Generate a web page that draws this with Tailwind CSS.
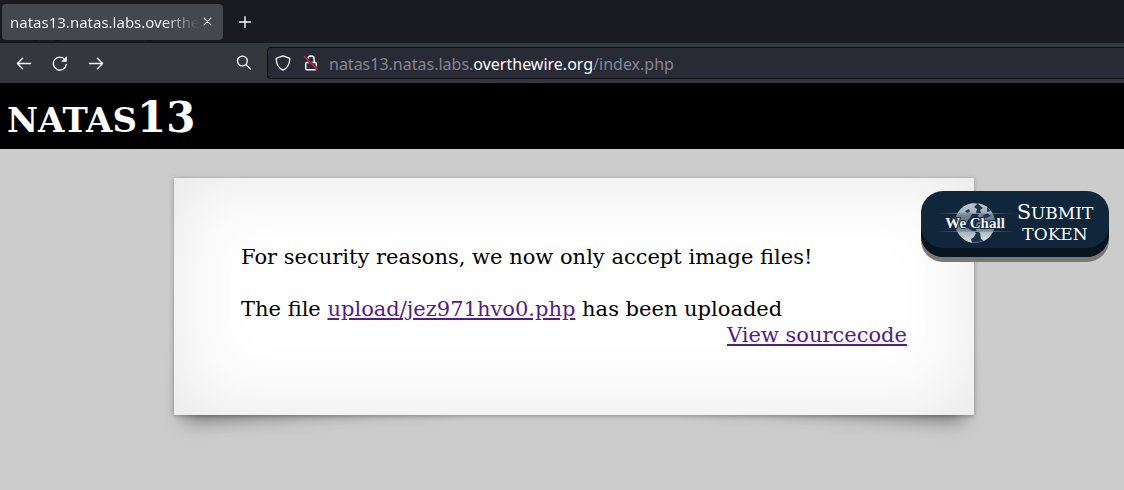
<!DOCTYPE html>
<html lang="en">
<head>
<meta charset="utf-8">
<title>natas13</title>
<script src="https://cdn.jsdelivr.net/npm/@tailwindcss/browser@4"></script>
</head>
<body class="flex min-h-screen flex-col overflow-x-hidden bg-[#cccccc] font-['DejaVu_Serif',serif] text-black">

<div class="font-['Noto_Sans',sans-serif]">
  <div class="relative flex h-[42px] items-center bg-[#1a1b20] pt-px pl-[2px]">
    <svg class="absolute bottom-0 left-0 h-3 w-40" viewBox="0 0 160 12" fill="none" stroke="#121317" stroke-width="3" aria-hidden="true"><path d="M0 6Q25 3 38 12M55 12Q70 2 92 9M138 4l14 8"/></svg>
    <div class="relative flex h-9 w-[221px] items-center rounded-[4px] bg-[#45474e] pl-2">
      <span class="w-[189px] overflow-hidden bg-linear-to-r from-[#fbfbfe] from-80% to-transparent bg-clip-text text-[15px] leading-6 whitespace-nowrap text-transparent">natas13.natas.labs.overthewire.org</span>
      <button class="flex size-4 items-center justify-center" aria-label="Close tab"><svg class="size-[9px]" viewBox="0 0 10 10" stroke="#e8e8ea" stroke-width="1.2" stroke-linecap="round"><path d="M1.2 1.2l7.6 7.6M8.8 1.2L1.2 8.8"/></svg></button>
    </div>
    <button class="ml-[14px] flex size-4 items-center justify-center" aria-label="New tab"><svg class="size-3" viewBox="0 0 12 12" stroke="#fbfbfe" stroke-width="1.4" stroke-linecap="round"><path d="M6 .7v10.6M.7 6h10.6"/></svg></button>
  </div>

  <div class="flex h-[41px] items-center border-t border-[#17181c] bg-[#35373e] pl-4 text-[#fbfbfe]">
    <button aria-label="Back"><svg class="size-4" viewBox="0 0 16 16" fill="none" stroke="currentColor" stroke-width="1.3" stroke-linecap="round" stroke-linejoin="round"><path d="M14.6 8.5H1.4M6.6 3.3L1.4 8.5l5.2 5.2"/></svg></button>
    <button class="ml-5" aria-label="Reload"><svg class="size-4" viewBox="0 0 16 16" fill="none" stroke="currentColor" stroke-width="1.3" stroke-linecap="round" stroke-linejoin="round"><path d="M14.3 9.4A6.5 6.5 0 1 1 13 4.6"/><path d="M14.5 2v4.4h-4.4z" fill="currentColor" stroke-width=".6"/></svg></button>
    <button class="ml-5" aria-label="Forward"><svg class="size-4" viewBox="0 0 16 16" fill="none" stroke="currentColor" stroke-width="1.3" stroke-linecap="round" stroke-linejoin="round"><path d="M1.4 8.5h13.2M9.4 3.3l5.2 5.2-5.2 5.2"/></svg></button>
    <button class="ml-[132px]" aria-label="Search"><svg class="size-4" viewBox="0 0 16 16" fill="none" stroke="currentColor" stroke-width="1.3" stroke-linecap="round"><circle cx="6.4" cy="6" r="4.9"/><path d="M10 9.6l4.6 4.6"/></svg></button>
    <div class="ml-[15px] flex h-8 flex-1 items-center rounded-l-[4px] border border-r-0 border-[#0e0f13] bg-[#282a36] pl-[7px]">
      <svg class="size-4" viewBox="0 0 16 16" fill="none" stroke="currentColor" stroke-width="1.3" stroke-linejoin="round" aria-hidden="true"><path d="M8 .8L14.3 3.1Q14.8 3.3 14.8 4C14.6 9.4 12.2 13.2 8 15.2C3.8 13.2 1.4 9.4 1.2 4Q1.2 3.3 1.7 3.1Z"/></svg>
      <svg class="ml-3 size-4" viewBox="0 0 16 16" fill="none" stroke="currentColor" stroke-width="1.5" aria-hidden="true"><rect x="2.7" y="7.4" width="10.6" height="7.4" rx="1"/><path d="M4.8 7.2V4.2a3.2 3.2 0 0 1 6.4 0v3"/><path d="M1 1.2l13.8 13.6" stroke="#282a36" stroke-width="3"/><path d="M1 1.2l13.8 13.6" stroke="#e21b50" stroke-width="1.4"/></svg>
      <div role="textbox" contenteditable="true" aria-label="Address" class="ml-[10px] flex-1 pt-[2px] text-[16px] leading-6 whitespace-nowrap text-[#85868f]">natas13.natas.labs.<span class="text-[#fbfbfe]">overthewire.org</span>/index.php</div>
    </div>
  </div>
</div>

<header class="flex h-[66px] items-center bg-black pl-[7px]">
  <h1 class="text-[42px] leading-[50px] font-bold text-white [font-variant:small-caps]"><span class="text-[49px]">natas</span>13</h1>
</header>

<main class="relative isolate flex-1 pt-[29px] pl-6">
  <div class="relative mx-auto max-w-[800px] bg-white px-[67px] pt-[66px] pb-[67px] text-[21px] leading-[26px] shadow-[0_1px_5px_rgba(0,0,0,0.3),inset_0_0_80px_rgba(0,0,0,0.1)] before:absolute before:bottom-4 before:left-4 before:-z-10 before:h-[134px] before:w-[267px] before:-rotate-4 before:-skew-x-8 before:shadow-[0_12px_20px_rgba(0,0,0,0.45)] after:absolute after:right-4 after:bottom-4 after:-z-10 after:h-[134px] after:w-[267px] after:rotate-4 after:skew-x-8 after:shadow-[0_12px_20px_rgba(0,0,0,0.45)]">
    <p class="mb-[26px]">For security reasons, we now only accept image files!</p>
    <p>The file <a href="#" class="text-[#551a8b] underline">upload/jez971hvo0.php</a> has been uploaded</p>
    <p class="text-right"><a href="#" class="text-[#551a8b] underline">View sourcecode</a></p>
  </div>

  <button class="absolute top-[42px] right-[15px] flex h-[66px] w-[188px] items-center rounded-[22px] bg-[#10263a] pb-1 pl-4 text-white shadow-[inset_0_-9px_0_#08151f,0_5px_0_#7b7777]">
    <svg class="h-11 w-[76px] shrink-0" viewBox="0 0 76 44" aria-label="We Chall">
      <defs>
        <linearGradient id="beam"><stop stop-color="#7595ae" stop-opacity="0"/><stop offset=".5" stop-color="#7595ae"/><stop offset="1" stop-color="#7595ae" stop-opacity="0"/></linearGradient>
        <linearGradient id="land" x2="0" y2="1"><stop stop-color="#c3cdd8"/><stop offset=".5" stop-color="#7d8c9b"/><stop offset="1" stop-color="#dce2e8"/></linearGradient>
        <clipPath id="globe"><circle cx="38" cy="23" r="20"/></clipPath>
      </defs>
      <circle cx="38" cy="23" r="19.5" fill="#1d354b" stroke="#8797a7" stroke-width=".6"/>
      <g clip-path="url(#globe)" fill="url(#land)">
        <path d="M17 20L20 11L27 5L35 3L40 4L37 7L40 9L39 13L35 14L33 18L31 20L29 24L26 23L25 26L30 28L36 31L39 33L37 37L34 39L35 43L29 41L23 36L20 31L17 26Z"/>
        <path d="M41 4L44 3L53 7L58 14L59 24L56 33L52 39L47 41L44 39L43 33L39 30L39 25L42 20L41 15L44 13L43 10L46 8Z"/>
      </g>
      <path d="M45 16l5-3 4 3-5 2zM50 7l4 4-4 1zM28 11l4-2 1 3-3 1zM53 20l3 1-1 2z" fill="#25415a"/>
      <rect y="13" width="76" height="1" fill="url(#beam)"/><rect y="31" width="76" height="1" fill="url(#beam)"/>
      <rect x="8" y="14" width="60" height="17" fill="#10263a" opacity=".25"/>
      <text x="38" y="28" text-anchor="middle" font-family="Liberation Serif, serif" font-size="15" font-weight="700" fill="#f0f3f6" stroke="#10263a" stroke-width="2" paint-order="stroke">We Chall</text>
    </svg>
    <span class="flex-1 pr-3 text-center text-[21px] leading-5 [font-variant:small-caps]">S<span class="text-[24px]">ubmit token</span></span>
  </button>
</main>
</body>
</html>
